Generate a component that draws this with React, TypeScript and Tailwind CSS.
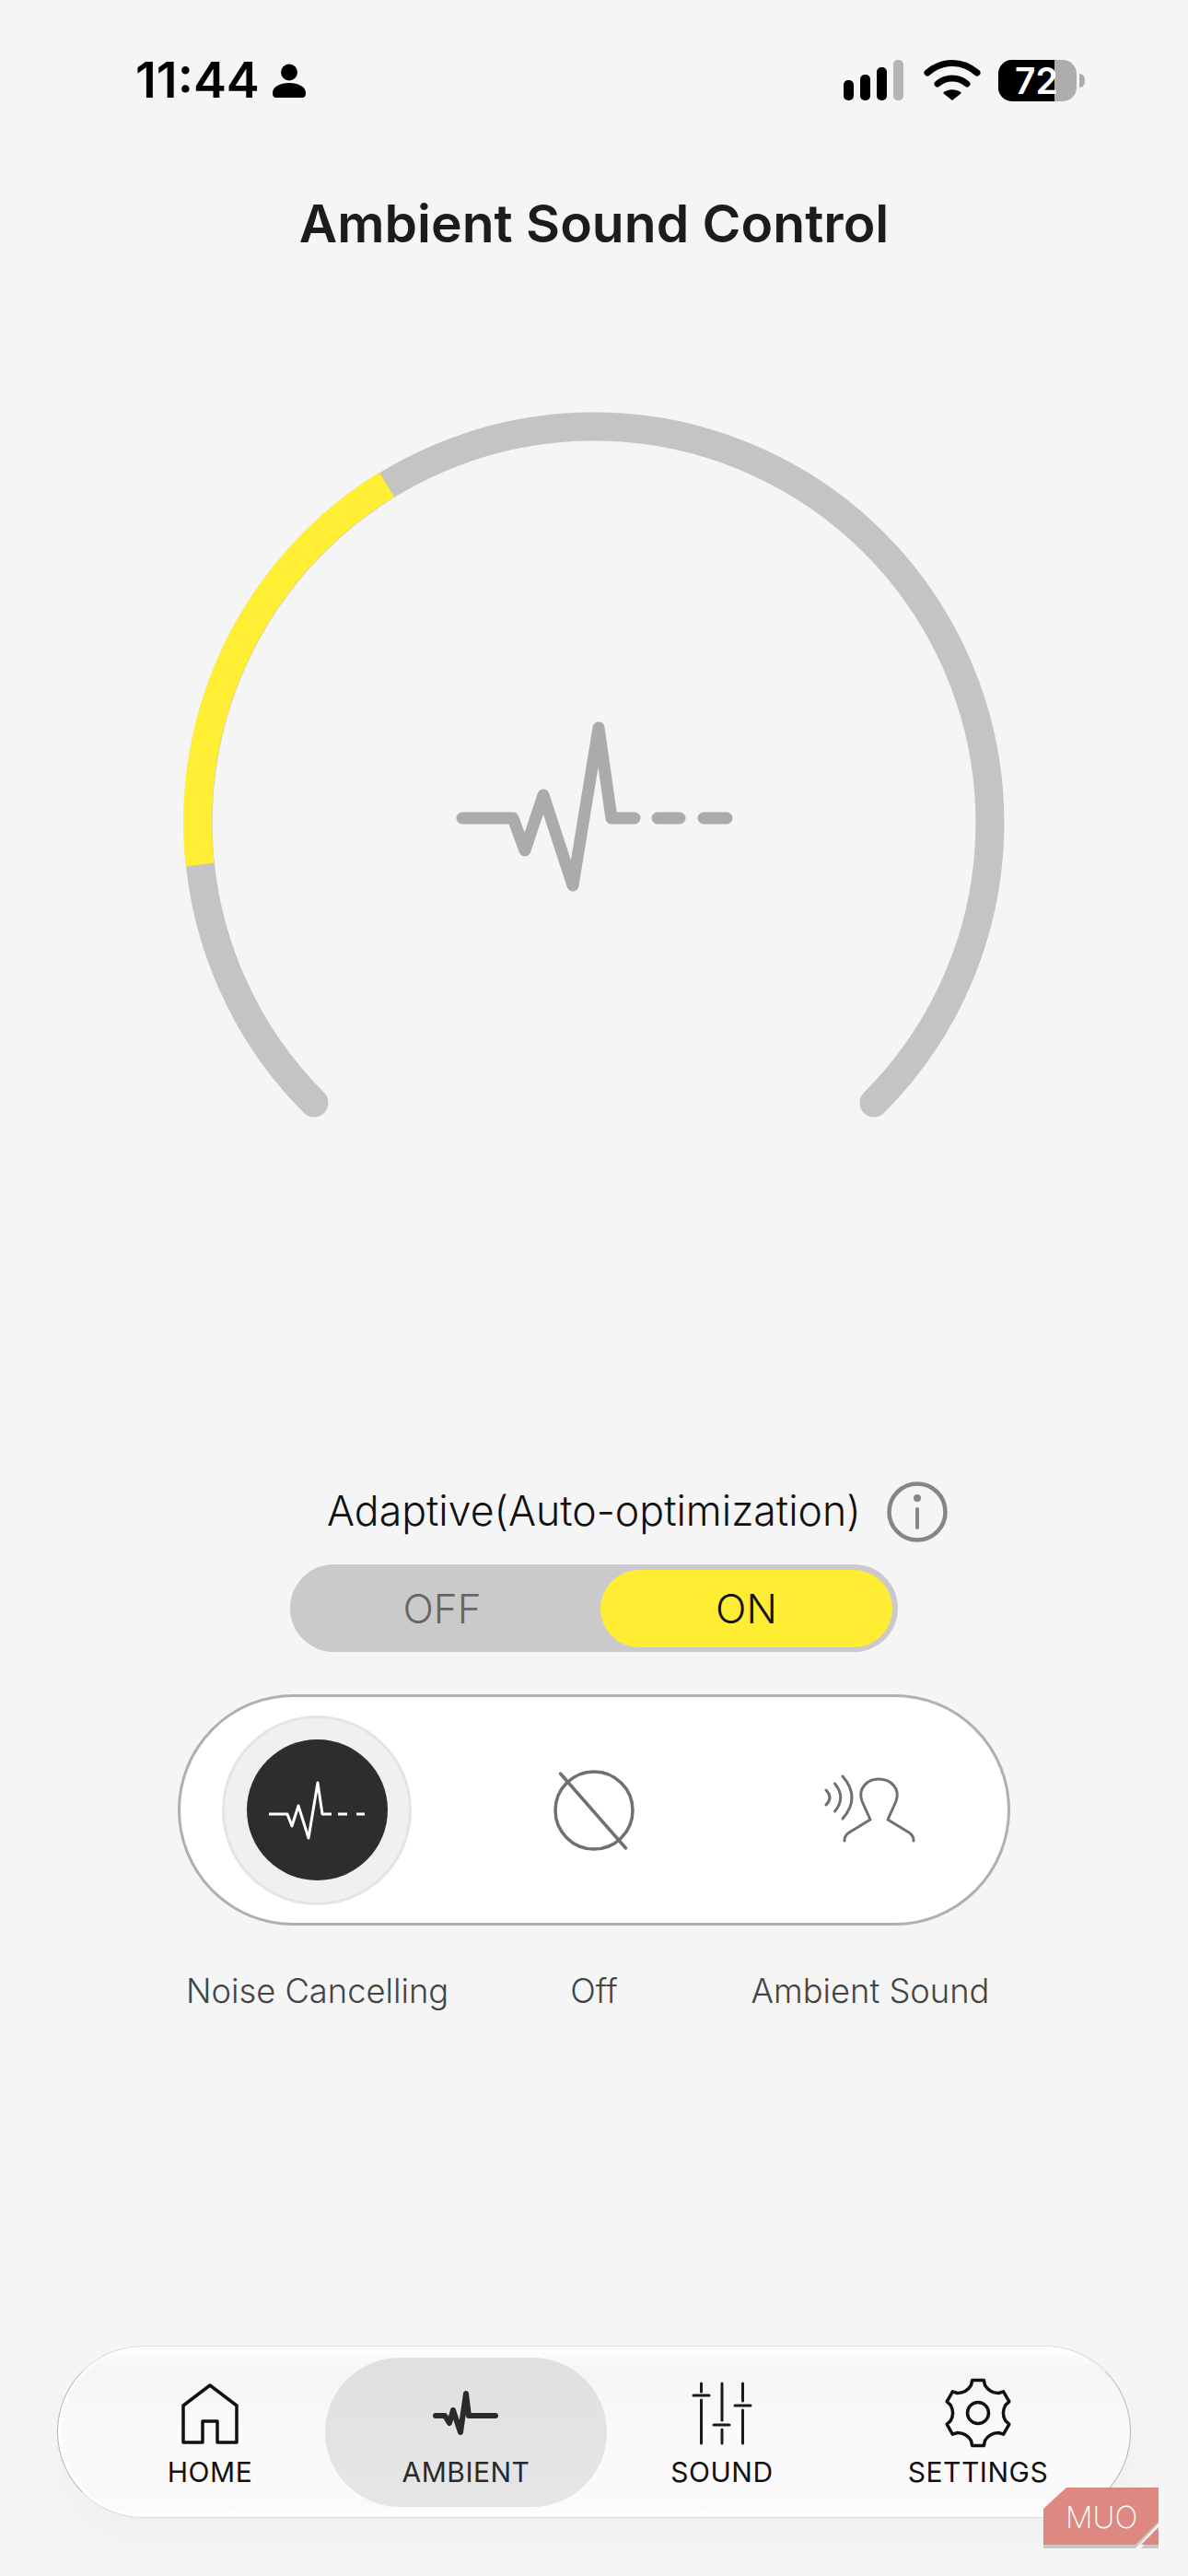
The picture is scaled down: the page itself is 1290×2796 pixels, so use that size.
import React from "react";

const FONT = "font-['Inter','Liberation_Sans',sans-serif]";

// six tooth gear, centre and radii in page px
const gearPath = (cx: number, cy: number) => {
  const tip = 36;
  const valley = 27;
  const pt = (deg: number, r: number) => {
    const a = (deg * Math.PI) / 180;
    return `${(cx + r * Math.cos(a)).toFixed(1)} ${(cy + r * Math.sin(a)).toFixed(1)}`;
  };
  let d = "";
  for (let i = 0; i < 6; i++) {
    const c = -90 + i * 60;
    d += `${i === 0 ? "M" : "L"}${pt(c - 10, tip)} L${pt(c + 10, tip)} `;
    d += `L${pt(c + 14, tip - 5)} Q${pt(c + 30, valley - 2)} ${pt(c + 46, tip - 5)} `;
  }
  return d + "Z";
};

const StatusBar = () => (
  <div className="mt-[62px] flex h-[50px] items-center justify-between pl-[147px] pr-[112px] text-black">
    <div className="flex items-center gap-[13px]">
      <span className="text-[54px] font-semibold leading-[50px]">11:44</span>
      <svg width="38" height="38" viewBox="0 0 38 38" fill="currentColor">
        <circle cx="19" cy="10.5" r="9" />
        <path d="M1 33C1 26 9 22 19 22C29 22 37 26 37 33C37 36 36 38 33 38H5C2 38 1 36 1 33Z" />
      </svg>
    </div>
    <div className="flex items-center">
      <svg width="66" height="44" viewBox="0 0 66 44">
        <rect x="0" y="22" width="11" height="22" rx="5" />
        <rect x="18" y="16" width="11" height="28" rx="5" />
        <rect x="36" y="8" width="11" height="36" rx="5" />
        <rect x="54" y="0" width="11" height="44" rx="5" fill="#b5b5b5" />
      </svg>
      <svg className="ml-[21px]" width="62" height="46" viewBox="0 0 62 46" fill="none" stroke="black" strokeWidth="7" strokeLinecap="round">
        <path d="M4 15C20 1 42 1 58 15" />
        <path d="M15 27C24 19 38 19 47 27" />
        <path d="M31 45L21 37C26 32 36 32 41 37Z" fill="black" stroke="none" />
      </svg>
      <div className="ml-[19px] flex h-[45px] w-[85px] rounded-[15px] bg-[#adadad]">
        <div className="h-full w-[61px] whitespace-nowrap rounded-l-[15px] bg-black pl-[18px] text-[39px] font-semibold leading-[45px] text-white">
          72
        </div>
      </div>
      <div className="ml-[3px] h-[15px] w-[6px] rounded-r-full bg-[#adadad]" />
    </div>
  </div>
);

const Gauge = () => (
  <svg className="mx-auto mt-[165px] block" width="920" height="780" viewBox="185 440 920 780" fill="none">
    <path d="M341 1197A430 430 0 1 1 949 1197" stroke="#c4c4c4" strokeWidth="31" strokeLinecap="round" />
    <path d="M217 938.5A430 430 0 0 1 420 526" stroke="#ffee33" strokeWidth="31" />
    <g stroke="#ababab" strokeWidth="13" strokeLinecap="round" strokeLinejoin="round">
      <path d="M502 888H557L570 923L590 863L622 961L650 790L664 888H689" />
      <path d="M714 888H738M764 888H789" />
    </g>
  </svg>
);

const Adaptive = () => (
  <>
    <div className="mt-[388px] flex h-[65px] items-center gap-[31px] pl-[355px]">
      <span className="w-[577px] whitespace-nowrap text-[44.6px] font-light leading-[65px] text-[#111111]">
        Adaptive(Auto-optimization)
      </span>
      <svg width="66" height="66" viewBox="0 0 66 66" fill="none">
        <circle cx="33" cy="33" r="30.5" stroke="#858585" strokeWidth="4.5" />
        <circle cx="33" cy="18" r="4" fill="#858585" />
        <path d="M33 30V50" stroke="#858585" strokeWidth="4" strokeLinecap="round" />
      </svg>
    </div>
    <div className="ml-[315px] mt-[25px] flex h-[95px] w-[660px] items-center rounded-full bg-[#cacacc] text-[44px] font-light">
      <div className="w-[330px] text-center text-[#666666]">OFF</div>
      <div className="ml-[7px] flex h-[84px] w-[317px] items-center justify-center rounded-full bg-[#ffed33] text-[#111111]">
        ON
      </div>
    </div>
  </>
);

const ModeSwitch = () => (
  <>
    <div className="ml-[193px] mt-[46px] flex h-[251px] w-[904px] items-center rounded-full border-[3px] border-[#b0b0b0] bg-white pl-[45px]">
      <div className="flex h-[206px] w-[206px] items-center justify-center rounded-full border-[3px] border-[#e4e4e4] bg-[#f0f0f0]">
        <div className="flex h-[153px] w-[153px] items-center justify-center rounded-full bg-[#2d2d2d]">
          <svg width="112" height="70" viewBox="288 1930 112 70" fill="none" stroke="white" strokeWidth="3" strokeLinejoin="round">
            <path d="M292 1969H312L317 1982L324 1960L335 1995L345 1935L350 1969H360" />
            <path d="M367 1969H377M387 1969H396" />
          </svg>
        </div>
      </div>
      <svg className="ml-[153px]" width="90" height="90" viewBox="600 1920 90 90" fill="none" stroke="#707070" strokeWidth="3.5">
        <circle cx="645" cy="1965" r="42" />
        <path d="M608.5 1925L679.5 2006" strokeLinecap="round" />
      </svg>
      <svg className="ml-[205px]" width="100" height="80" viewBox="895 1925 100 80" fill="none" stroke="#707070" strokeWidth="3" strokeLinecap="round" strokeLinejoin="round">
        <path d="M915 1928Q935 1951 915 1974" />
        <path d="M906.5 1936Q919 1951 906.5 1966" />
        <path d="M897 1943Q905 1951 897 1959" />
        <path d="M917 1998Q917 1992 922 1989L945 1975L936 1955C931 1941 942 1931 954 1931C967 1931 978 1941 973 1955L964 1975L987 1989Q992 1992 992 1998" />
      </svg>
    </div>
    <div className="ml-[194px] mt-[49px] flex h-[44px] text-[36.3px] font-light leading-[44px] text-[#444444]">
      <div className="w-[301px] whitespace-nowrap text-center">Noise Cancelling</div>
      <div className="w-[300px] whitespace-nowrap text-center">Off</div>
      <div className="w-[300px] whitespace-nowrap text-center">Ambient Sound</div>
    </div>
  </>
);

const navLabel = "mt-[5px] whitespace-nowrap text-[30px] font-normal leading-[36px] tracking-[0.5px]";

const BottomNav = () => (
  <div className="ml-[62px] mt-[363px] flex h-[187px] w-[1166px] items-center rounded-full border border-x-[#b4b4b4] border-y-[#dcdcdc] bg-[linear-gradient(180deg,#ffffff_0%,#f5f5f5_14%,#fafafa_50%,#fafafa_92%,#ffffff_100%)] pl-[65px] shadow-[0_24px_40px_rgba(0,0,0,0.025),inset_3px_0_3px_#ffffff]">
    <div className="flex h-[162px] w-[200px] flex-col items-center pt-[21px] text-[#111111]">
      <svg width="80" height="80" viewBox="188 2580 80 80" fill="none" stroke="#111111" strokeWidth="3.5" strokeLinejoin="round">
        <path d="M199 2651V2611L228 2589L257 2611V2651H236V2628H220V2651Z" />
      </svg>
      <span className={navLabel}>HOME</span>
    </div>
    <div className="ml-[25px] flex h-[162px] w-[306px] flex-col items-center rounded-[81px] bg-[linear-gradient(180deg,#e0e0e0,#e6e6e6)] pt-[21px] text-[#2a2a2a]">
      <svg width="80" height="80" viewBox="466 2580 80 80" fill="none" stroke="#2a2a2a" strokeWidth="6" strokeLinecap="round" strokeLinejoin="round">
        <path d="M473 2622H483L488 2630L492 2616L500 2640L506 2598L509 2622H538" />
      </svg>
      <span className={navLabel}>AMBIENT</span>
    </div>
    <div className="ml-[25px] flex h-[162px] w-[200px] flex-col items-center pt-[21px] text-[#111111]">
      <svg width="80" height="80" viewBox="744 2580 80 80" fill="none" stroke="#1a1a1a" strokeWidth="3" strokeLinecap="round">
        <path d="M761.5 2587V2596M761.5 2605V2652M753 2600H770" />
        <path d="M784 2587V2627M784 2637V2652M775 2632H792" />
        <path d="M806.5 2587V2606M806.5 2616V2652M798 2611H815" />
      </svg>
      <span className={navLabel}>SOUND</span>
    </div>
    <div className="ml-[78px] flex h-[162px] w-[200px] flex-col items-center pt-[21px] text-[#111111]">
      <svg width="80" height="80" viewBox="1022 2580 80 80" fill="none" stroke="#111111" strokeWidth="3.5" strokeLinejoin="round">
        <path d={gearPath(1062, 2619)} />
        <circle cx="1062" cy="2619" r="11.5" />
      </svg>
      <span className={navLabel}>SETTINGS</span>
    </div>
  </div>
);

// site watermark, sits over the nav corner
const Watermark = () => (
  <div className="absolute left-[1133px] top-[2700px] h-[66px] w-[125px]">
    <svg className="absolute inset-0" width="125" height="66" viewBox="0 0 125 66">
      <path d="M0 64V23L25 0H125V37L100 64Z" fill="#000000" opacity="0.18" transform="translate(0 2)" />
      <path d="M125 43V64H106Z" fill="#000000" opacity="0.18" transform="translate(0 2)" />
      <path d="M0 62V23L25 0H125V37L100 62Z" fill="#dd8880" />
      <path d="M125 43V62H106Z" fill="#dd8880" />
    </svg>
    <span className="absolute left-[24px] top-[14px] text-[33px] font-extralight leading-[36px] text-white">
      MUO
    </span>
  </div>
);

export default function App() {
  return (
    <div className={`relative flex h-[2796px] w-[1290px] flex-col overflow-hidden bg-[#f5f5f5] ${FONT}`}>
      <StatusBar />
      <h1 className="mt-[99px] h-[64px] text-center text-[57px] font-semibold leading-[64px] text-[#1c1c1c]">
        Ambient Sound Control
      </h1>
      <Gauge />
      <Adaptive />
      <ModeSwitch />
      <BottomNav />
      <Watermark />
    </div>
  );
}
